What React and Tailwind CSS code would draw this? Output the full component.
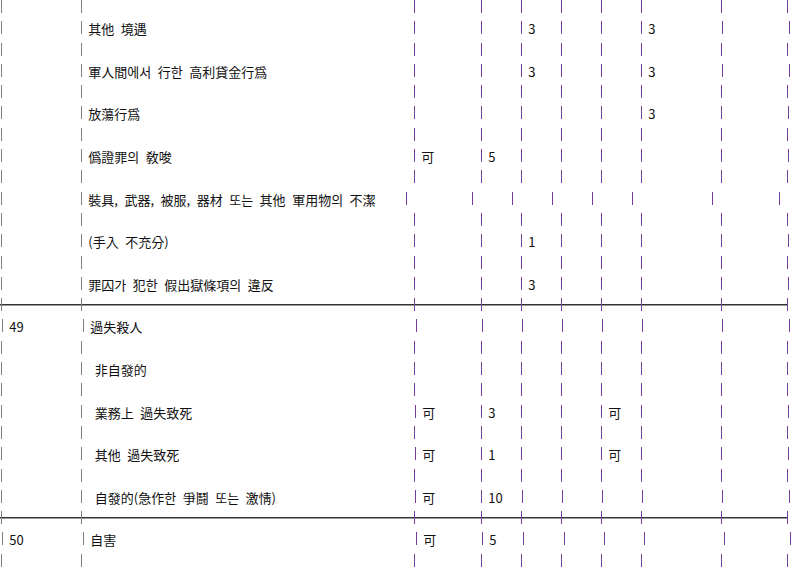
import React from "react";

const STD = [1, 81, 414, 481, 521, 561, 601, 641, 721, 787];
const A = [1, 81, 414, 481, 521, 561, 601, 641, 722, 789];
const B = [1, 81, 414, 481, 521, 561, 601, 641, 721, 788];
const S9 = [1, 81, 406, 472, 512, 552, 592, 632, 712, 779];
const S15 = [2, 83, 416, 482, 522, 562, 602, 642, 722, 789];
const S19 = [1, 81, 415, 481, 521, 561, 601, 641, 721, 788];
const S23 = [1, 81, 415, 481, 522, 562, 602, 642, 722, 789];
const S25 = [2, 83, 416, 482, 523, 564, 604, 644, 724, 790];

const blank = { pos: STD, cells: {} };

const LINES = [
  blank,
  { pos: A, cells: { 1: "其他 境遇", 4: "3", 7: "3" } },
  blank,
  { pos: A, cells: { 1: "軍人間에서 行한 高利貸金行爲", 4: "3", 7: "3" } },
  blank,
  { pos: B, cells: { 1: "放蕩行爲", 7: "3" } },
  blank,
  { pos: B, cells: { 1: "僞證罪의 敎唆", 2: "可", 3: "5" } },
  blank,
  { pos: S9, cells: { 1: "裝具, 武器, 被服, 器材 또는 其他 軍用物의 不潔" } },
  blank,
  { pos: B, cells: { 1: "(手入 不充分)", 4: "1" } },
  blank,
  { pos: B, cells: { 1: "罪囚가 犯한 假出獄條項의 違反", 4: "3" } },
  { pos: STD, cells: {}, rule: true },
  { pos: S15, cells: { 0: "49", 1: "過失殺人" } },
  blank,
  { pos: STD, cells: { 1: " 非自發的" } },
  blank,
  { pos: S19, cells: { 1: " 業務上 過失致死", 2: "可", 3: "3", 6: "可" } },
  blank,
  { pos: S19, cells: { 1: " 其他 過失致死", 2: "可", 3: "1", 6: "可" } },
  blank,
  { pos: S23, cells: { 1: " 自發的(急作한 爭鬪 또는 激情)", 2: "可", 3: "10" } },
  { pos: STD, cells: {}, rule: true },
  { pos: S25, cells: { 0: "50", 1: "自害", 2: "可", 3: "5" } },
  blank,
];

function Line({ pos, cells, rule }) {
  return (
    <div className="relative flex h-[21.3px] shrink-0">
      {rule && (
        <div className="absolute left-0 top-[6px] h-[2px] w-[788px] border-t border-[#333333] bg-[#9a9a9a]" />
      )}
      <div className="shrink-0" style={{ width: pos[0] }} />
      {pos.map((x, i) => {
        const w = i < pos.length - 1 ? pos[i + 1] - x : 3;
        return (
          <div key={i} className="relative flex shrink-0 items-start" style={{ width: w }}>
            <span
              className={
                i < 2
                  ? "h-[13px] w-[1.3px] shrink-0 bg-[#7e7e7e]"
                  : "h-[13px] w-[1.3px] shrink-0 bg-[#743c9c]"
              }
            />
            {cells[i] && (
              <span className="ml-[6px] mt-px whitespace-pre text-[13px] leading-[13px] [word-spacing:3.6px]">
                {cells[i]}
              </span>
            )}
          </div>
        );
      })}
    </div>
  );
}

export default function App() {
  return (
    <div className="flex h-[568px] w-[792px] flex-col overflow-hidden bg-white font-['Noto_Sans_CJK_KR','Noto_Sans_CJK_SC',sans-serif] text-[#111111]">
      {LINES.map((l, i) => (
        <Line key={i} {...l} />
      ))}
    </div>
  );
}
